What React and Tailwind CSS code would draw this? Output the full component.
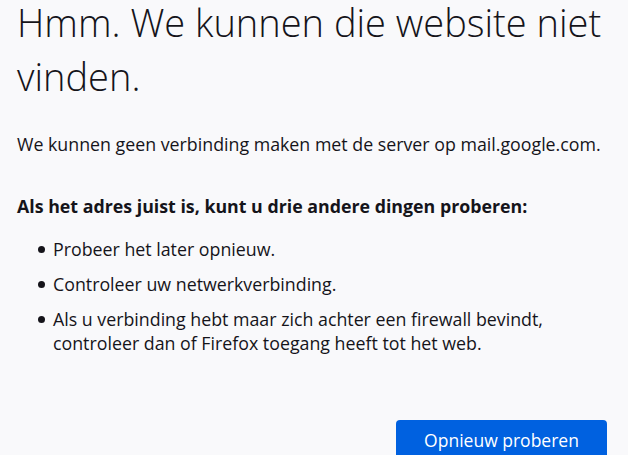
import React from "react";

function Bullet() {
  return (
    <span className="w-[36px] shrink-0 flex justify-end pr-[8px] pt-[9px]">
      <span className="w-[7px] h-[7px] rounded-full bg-[#15141a]" />
    </span>
  );
}

export default function App() {
  return (
    <div className="h-screen bg-[#f9f9fb] text-[#15141a] font-['Open_Sans',sans-serif] pl-[17px] pr-[20px] overflow-hidden">
      <h1 className="text-[38px] font-light">
        <span className="block leading-[44px]">Hmm. We kunnen die website niet</span>
        <span className="block leading-[64px]">vinden.</span>
      </h1>
      <p className="mt-[24px] text-[17.8px] leading-[24px]">
        We kunnen geen verbinding maken met de server op mail.google.com.
      </p>
      <p className="mt-[38px] text-[17.8px] leading-[24px] font-bold">
        Als het adres juist is, kunt u drie andere dingen proberen:
      </p>
      <ul className="mt-[19px] text-[17.8px] leading-[24px] flex flex-col gap-[11px]">
        <li className="flex">
          <Bullet />
          <span>Probeer het later opnieuw.</span>
        </li>
        <li className="flex">
          <Bullet />
          <span>Controleer uw netwerkverbinding.</span>
        </li>
        <li className="flex">
          <Bullet />
          <span>
            Als u verbinding hebt maar zich achter een firewall bevindt,
            <br />
            controleer dan of Firefox toegang heeft tot het web.
          </span>
        </li>
      </ul>
      <div className="flex justify-end mt-[65px] pr-px">
        <button className="h-[42px] w-[211px] rounded-[4px] bg-[#0061e0] text-white text-[17.5px] leading-[24px] flex items-start justify-center pt-[8px]">
          Opnieuw proberen
        </button>
      </div>
    </div>
  );
}
